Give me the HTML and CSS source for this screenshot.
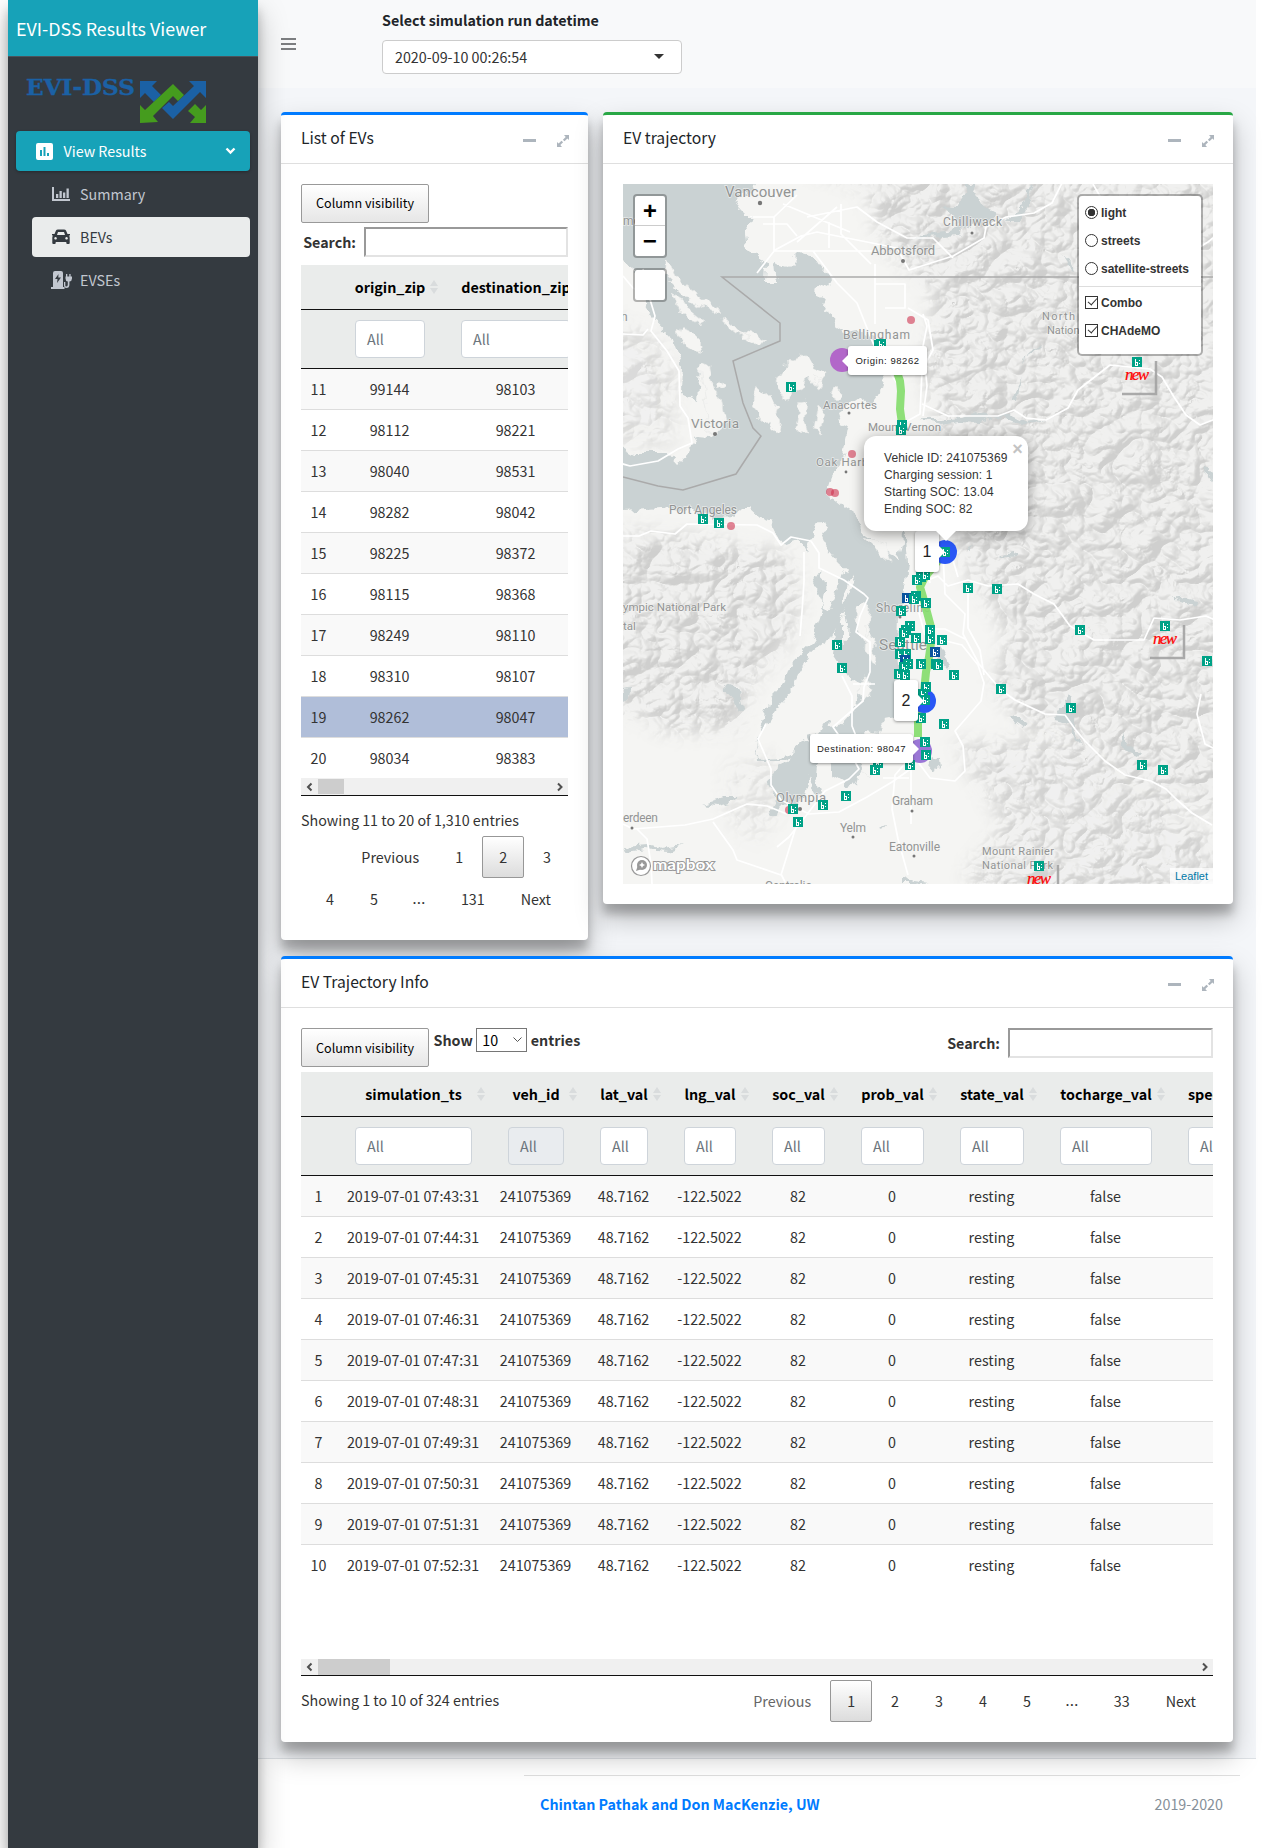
FILE: index.html
```html
<!DOCTYPE html>
<html lang="en">
<head>
<meta charset="utf-8">
<title>EVI-DSS Results Viewer</title>
<link rel="stylesheet" href="styles.css">
</head>
<body>
<svg class="defs" width="0" height="0" aria-hidden="true">
  <defs>
  <path id="expand" d="M8 1h5v5l-1.600-1.600-2.900 2.900-1.600-1.600 2.800-2.800zM6 13H1V8l1.600 1.600 2.900-2.900 1.600 1.600-2.800 2.800z"/>
  <g id="ev"><path fill="#00a287" d="M0 0h10v10H0z"/><path fill="#fff" d="M3 2h1v3h2v4H3zM7 3h1v1H7zM7 6h1v1H7z"/><path fill="#00a287" d="M4 6h1v2H4z"/></g>
  <g id="evb"><path fill="#0a549e" d="M0 0h10v10H0z"/><path fill="#fff" d="M3 2h1v3h2v4H3zM7 3h1v1H7zM7 6h1v1H7z"/><path fill="#0a549e" d="M4 6h1v2H4z"/></g>
  <path id="sort" fill="#d9dcdd" d="M4 0l4 6H0zM4 14l4-6H0z"/>
  </defs>
</svg>
<div class="app">
  <aside class="sidebar">
    <div class="brand">EVI-DSS Results Viewer</div>
    <svg class="logo" viewBox="0 0 184 50" width="184" height="50">
      <text x="0" y="22" textLength="109" lengthAdjust="spacingAndGlyphs">EVI-DSS</text>
      <g fill="#1b61a5"><path d="M114 8h17l-5 5 9 9-7 7-9-9-5 5z"/><path d="M180 8h-17l5 5-21 20-4-4-7 6 11 11 27-27 6 6z"/></g>
      <g fill="#459c1e"><path d="M114 50V32l5 5 28-26 11 11-6 6-5-5-20 20 5 6z"/><path d="M180 50V32l-5 5-6-6-7 7 7 6-5 6z"/></g>
    </svg>
    <nav class="menu">
      <a class="item top">
        <svg class="ic" width="17" height="17" viewBox="0 0 17 17"><path fill="#fff" fill-rule="evenodd" d="M2 0h13q2 0 2 2v13q0 2-2 2H2q-2 0-2-2V2q0-2 2-2zM4 7v6h2V7zM7.500 4v9h2V4zM11 10v3h2v-3z"/></svg>
        <span>View Results</span>
        <svg class="chev" width="11" height="8" viewBox="0 0 11 8"><path d="M1.500 1.500l4 4 4-4" fill="none" stroke="#fff" stroke-width="2.400"/></svg>
      </a>
      <a class="item sub"><svg class="ic" width="20" height="16" viewBox="0 0 20 16"><path fill="#c2c7d0" d="M1 1h2v12h16v2H1zM5 8h2.300v4H5zM8.500 5h2.300v7H8.500zM12 6.500h2.300V12H12zM15.500 2.500h2.300V12h-2.300z"/></svg><span>Summary</span></a>
      <a class="item sub active"><svg class="ic" width="20" height="16" viewBox="0 0 20 16"><path fill="#343a40" fill-rule="evenodd" d="M5 1.500Q5.500.5 7 .5h6q1.500 0 2 1L16.500 5H19v1.500h-1.300q1 .7 1 2V14q0 1-1 1h-1.400q-1 0-1-1v-1H4.700v1q0 1-1 1H2.300q-1 0-1-1V8.500q0-1.300 1-2H1V5h2.500zM7 3L6 6h8l-1-3zM4.500 8a1.300 1.300 0 1 0 .1 0zM15.500 8a1.300 1.300 0 1 0 .1 0z"/></svg><span>BEVs</span></a>
      <a class="item sub"><svg class="ic" width="22" height="19" viewBox="0 0 22 19"><path fill="#c2c7d0" fill-rule="evenodd" d="M2 2q0-2 2-2h6q2 0 2 2v14h1.500v2H0v-2h2zM7.500 3L4 8h2.500L6 12l4-5.500H7.300z"/><path fill="#c2c7d0" d="M15 3h1.300V5.500h2V3h1.300v2.500H21v2q0 2.500-2.600 3v3q0 3.500-3 3.500-2.400 0-2.400-2.500V11h1.300v3.500q0 1 1 1 1.500 0 1.500-2v-3q-2.300-.5-2.300-3v-2h.5z"/></svg><span>EVSEs</span></a>
    </nav>
  </aside>
  <div class="main">
    <header class="topbar">
      <svg class="burger" width="15" height="13" viewBox="0 0 15 13"><path fill="#7c7e80" d="M0 0h15v2H0zM0 5h15v2H0zM0 10h15v2H0z"/></svg>
      <div class="picker">
        <label>Select simulation run datetime</label>
        <div class="select"><span>2020-09-10 00:26:54</span><i></i></div>
      </div>
    </header>
    <section class="content">
      <div class="card evs">
        <div class="card-head"><h3>List of EVs</h3><b class="min"></b><svg class="exp"><use href="#expand"/></svg></div>
        <div class="card-body">
          <button class="btn">Column visibility</button>
          <label class="search">Search:<input type="text"></label>
          <div class="scroll">
            <table class="t1">
              <colgroup><col class="c36"><col class="c106"><col class="c146"></colgroup>
              <thead>
                <tr class="names"><th></th><th>origin_zip<svg class="so"><use href="#sort"/></svg></th><th>destination_zip</th></tr>
                <tr class="filters"><th></th><th><div class="f">All</div></th><th><div class="f">All</div></th></tr>
              </thead>
              <tbody>
                <tr><td>11</td><td>99144</td><td>98103</td></tr>
                <tr><td>12</td><td>98112</td><td>98221</td></tr>
                <tr><td>13</td><td>98040</td><td>98531</td></tr>
                <tr><td>14</td><td>98282</td><td>98042</td></tr>
                <tr><td>15</td><td>98225</td><td>98372</td></tr>
                <tr><td>16</td><td>98115</td><td>98368</td></tr>
                <tr><td>17</td><td>98249</td><td>98110</td></tr>
                <tr><td>18</td><td>98310</td><td>98107</td></tr>
                <tr class="sel"><td>19</td><td>98262</td><td>98047</td></tr>
                <tr><td>20</td><td>98034</td><td>98383</td></tr>
              </tbody>
            </table>
          </div>
          <div class="bar"><svg width="17" height="16" viewBox="0 0 17 16"><path d="M10.500 4.500L7 8l3.500 3.500"/></svg><span class="thumb w26"></span><svg class="r" width="17" height="16" viewBox="0 0 17 16"><path d="M7 4.500L10.500 8 7 11.500"/></svg></div>
          <div class="info">Showing 11 to 20 of 1,310 entries</div>
          <div class="pages"><a>Previous</a><a>1</a><a class="cur">2</a><a>3</a><a>4</a><a>5</a><span>…</span><a>131</a><a>Next</a></div>
        </div>
      </div>

      <div class="card traj">
        <div class="card-head"><h3>EV trajectory</h3><b class="min"></b><svg class="exp"><use href="#expand"/></svg></div>
        <div class="card-body">
          <div class="map">
            <svg class="canvas" width="590" height="700" viewBox="0 0 590 700">
              <defs>
                <filter id="hill" x="0" y="0" width="100%" height="100%" color-interpolation-filters="sRGB">
                  <feTurbulence type="turbulence" baseFrequency=".026 .03" numOctaves="3" seed="8" result="n"/>
                  <feColorMatrix in="n" type="matrix" values="0 0 0 0 0 0 0 0 0 0 0 0 0 0 0 1.200 0 0 0 0"/>
                  <feDiffuseLighting surfaceScale="15" diffuseConstant="1.130" lighting-color="#fff"><feDistantLight azimuth="225" elevation="55"/></feDiffuseLighting>
                  <feComponentTransfer><feFuncR type="linear" slope=".13" intercept=".815"/><feFuncG type="linear" slope=".13" intercept=".815"/><feFuncB type="linear" slope=".13" intercept=".81"/></feComponentTransfer>
                </filter>
                <filter id="coast" filterUnits="userSpaceOnUse" x="-20" y="-20" width="630" height="740">
                  <feTurbulence type="fractalNoise" baseFrequency=".09" numOctaves="3" seed="3" result="t"/>
                  <feDisplacementMap in="SourceGraphic" in2="t" scale="11" xChannelSelector="R" yChannelSelector="G"/>
                </filter>
                <filter id="soft"><feGaussianBlur stdDeviation="9"/></filter>
                <mask id="hills"><g filter="url(#soft)" fill="#fff">
                  <path d="M170-20H610V640L520 600 470 550 400 545 370 500 385 450 350 400 320 340 320 260 300 190 310 110 260 60 240 5z"/>
                  <path d="M330 560L470 550 610 670V720H380L340 690 380 640z" opacity=".9"/>
                  <path d="M-20 345L60 350 170 370 178 420 165 460 130 500 115 545 50 550-20 520z"/>
                  <path d="M-20 130L30 150 55 190 50 260-20 260z" opacity=".7"/><path d="M105 580l45-10 12 50-30 40-30-30z" opacity=".5"/>
                </g></mask>
              </defs>
              <path fill="#f5f5f3" d="M0 0h590v700H0z"/>
              <g mask="url(#hills)"><rect width="590" height="700" filter="url(#hill)"/></g>
              <g filter="url(#coast)">
              <g class="water">
                <path d="M-20-20H133V0L128 8 117 11 112 23 120 31 129 31 122 49 124 66 133 70 144 79 143 98 153 98 151 79 165 83 178 70 190 73 208 96 204 104 194 102 193 110 202 114 199 126 210 133 214 143 224 149 240 146 251 153 263 164 258 190 264 204 252 213 246 221 235 214 224 222 214 229 217 238 226 241 222 262 218 277 208 293 203 309 212 314 222 323 232 330 239 348 255 360 268 370 276 376 282 340 285 380 281 413 275 430 274 470 277 500 273 533 262 535 255 548 242 546 233 552 240 575 233 600 225 602 208 592 205 573 195 570 190 560 200 545 220 540 233 522 237 500 232 480 222 466 224 440 218 420 232 400 225 385 215 378 204 365 198 350 203 340 197 335 190 350 184 368 176 354 160 360 153 350 147 338 137 334 127 325 119 325 110 333 95 334 60 326 37 324 0 327H-20V263H0L10 269 44 269 54 280 64 272 74 253 86 254 94 249 97 223 90 199 84 179 77 183 74 216 59 209 60 183 49 153 30 133 20 116 19 93 7 85 0 72H-20z"/>
                <path d="M190 400l8-12 5 10-3 25 5 5 12-30 8-15 4 8-10 22 1 18-12 24-18 12-14 23-7 16-11 12-12 19-12 18-2 16 5 4 20-1 15-4 12-11-3-7 15-3 8-13 4 4-2 12-10 6-8 7-25 12h-29l-1-12 4-18 11-34 15-16 3-16 23-22 12-37-3-6z"/>
                <path d="M214 430l6 10v20l10 5 8 30-10 3-10-15-8-12z"/>
                <path d="M144 600l10-15 11-5 4-13 10-9 11 6 5-10 8-5 3 12-10 12-2 20 5 17-6 3-7-21-5 20-10 10-8-3-8 8-3 5-6-2 8-15z"/>
                <path d="M100 500l17 7 4 18-4 5-6-16-10-8zM0 506l6-1-1 10-5 2zM0 19v-4l4 4zM345 365l7-4-3 6zM376 371l18-5v4l-15 2zM316 460l5 6 6 15-4 5-8-9zM430 535l17-24 4 3 0 33 7 14-9-9-3-14zM500 548l7 15 10 6-3 4-9-4-7-12zM387 530l18 10-5 4-12-8zM308 572l8 5 1 7-6 4-6-7zM553 412l22 5-1 6-18-7z"/>
                <path d="M337 40l-14 8-24 3-10 5 12-2 35-2 10-12 22-4 3-8-15-8-7-15 2-5h-8l-1 9-8 14-14-1zM382 37l14-9 10-22 4-4-7 22-7 13zM437 67l10 8 3 13-3-3-4-12zM402 170l10-6 5-3-3 5-13 4-8 49-4-1 8-25zM300 235l24 0 16-1 15-5 12 3 18-2 19 9 20-3-17 5-20-3-14-7-18 7-18-1-21 3-15-3zM582 280l8 9v10l-6-10z"/>
                <path d="M280 700v-7l12 5 14 2zM80 620l20-6 18 0-6 4-18 4zM0 662l26-2 14 4 18-3-12 6-24-2-20 3zM256 644l8-2-4 5z"/>
              </g>
              <g fill="#f5f5f3" stroke="#e8e9e8" stroke-width=".7">
                <path d="M41 74l6 7 6 12 8 7 10 8 12 10 14 8-6 4-14-8-14-8-16-16-6-12zM50 110l10 6 8 12 12 9-2 5-12-7-10-10zM58 142l10 5 12 12 0 6-8 6-8-12-10-8zM100 133l12 9 5 8-10-4zM120 148l16 4 7 5-14 2-8-4zM77 182l8-3 4 20 10 20 3 20-8 13-8-2-2-25z"/>
                <path d="M158 186l10-11 12-4 11 9 12 8-1 8-12 4-8-5-3 10-10 3-2 8-8-5-6-12zM133 202l12 9 11 12-3 8 4 13-2 5-20-18-8-9zM176 218l8-2-2 20 3 12-12-1 2-15zM194 221l9 8-6 16 3 5-10-4zM192 192l8 4-3 8-7-6zM210 204l5-2 4 8-6 6-5-4zM238 352l10 10 20 15-6-16-18-6zM233 425l8-8 7 10-2 22-5 10-6-14zM243 440l9 14-2 26-8-12z"/>
                <path d="M243 552l8 5 5 20-8 18-10-5-3-18 4-10zM95 202l6-3 2 4-7 4zM115 147l12 8-9 1zM236 497l7-3 5 12-6 12-7-8z"/>
              </g>
              </g>
              <g class="roads">
                <path d="M0 92l10 12 16 8 6 20-4 15 16 20 12 20 1 35 8 12 4 25-14 6-20 12-28 5-21-6M0 150l20 1 5-6M20 85l4 15 6 15M134 89l14-18 4-5 26-14 16-4 80 16 12 22 44-14 31-18 2-11 20-10 28-4 18-10 15-30 6-12M127 33h24l23-22M151 33v34l28 0h70M150 15l8-10M160 20l24 10 43 18M174 58l40-35M184 33l50-10 20 15 30 16h26l20 20M140 40h24l10 12M206 38v26M218 20v30l30 30M190 67l24 32 20 20 16 40 10 20 14 20 5 45 4 35 12 60 12 60"/>
                <path d="M252 80v60M252 100h30V124h-20M285 124l20 12 5 30-11 20-2 44-18 10M299 220l26 12h50l16-6 12 8 20 2 22-12 10-18 32-25 40 4 12 8 12 20 12 18 14 10 20-8M470 0l8 14 10 5M565 70l20-12 5-4M300 130l4 12-4 20 4 40-4 30"/>
                <path d="M0 352l16 0 12-5 24 3 12-10 70 1 16 8 8 12 10-8 20 4 8 12v15l25 12 20 14 4 4-8 18-4 16 14 10v30l-6 15-1 14-30 26 14 20 12 22-10 10-24 12-20 26-16 20-12 10M181 368v30l-2 30-2 24M219 492l10 20v30l10 25M143 540l-8 15 13 30v16l10 15 28 14 30-2 28-15 25-15 20-14 14-24M230 500h22"/>
                <path d="M0 640l10 5 52-4 28-6 34-15 20 2 20 8M90 638l20 28 4 10 44 15 14-45M14 645l10 10 4 25 1 20M158 690l5 10M302 370v12l-6 22 0 25 6 22M295 400l20-8 10 10 20-6 20 6 30-2 16 10 20 10 16 22 24 14h50l10-22 26 2 26-4 22 10 7 12 0 24 12 45 10 6v30l-2 32 9 35M320 370l2 40 20 20-2 20 16 30 10 12 12 14 14 10 30 14 20 1 10 14 10 12 20 20 20 14 26 6 15 8 10 10 16 14 20 12M319 456l20 5 16 20 6 18-3 18-26 30 8 15 2 25-10 10-25-3-15-20M335 393l-6-20M578 510l-4 20 8 30 8 4M312 445h10l20 10M298 560l-12 15-14 16-3 34 6 30 10 36M288 585v55M260 594h26M345 404l0 40 12 22 4 25"/>
              </g>
              <path d="M590 93H99L157 139V157L110 177 120 219 130 244 138 252 113 290 60 306 35 302 0 293" fill="none" stroke="#aaa" stroke-width="1.500"/>
              <g class="labels">
                <text x="102" y="13" font-size="15" textLength="71">Vancouver</text><text x="248" y="71" font-size="13" textLength="64">Abbotsford</text><text x="320" y="42" font-size="12" textLength="59">Chilliwack</text>
                <text x="220" y="155" font-size="12" textLength="67">Bellingham</text><text x="200" y="225" font-size="11.500" textLength="54">Anacortes</text><text x="245" y="247" font-size="11.500" textLength="73">Mount Vernon</text><text x="68" y="244" font-size="13.500" textLength="48">Victoria</text>
                <text x="193" y="282" font-size="11.500" textLength="64">Oak Harbor</text><text x="46" y="330" font-size="12" textLength="68">Port Angeles</text><text x="0" y="41" font-size="12">mo</text><text x="-2" y="137" font-size="12">n</text>
                <text x="0" y="427" font-size="11.500" textLength="103">ympic National Park</text><text x="0" y="446" font-size="11.500">tal</text><text x="253" y="428" font-size="12" textLength="54">Shoreline</text><text x="256" y="466" font-size="15.500" textLength="48">Seattle</text>
                <text x="153" y="618" font-size="13" textLength="50">Olympia</text><text x="0" y="638" font-size="12" textLength="35">erdeen</text><text x="217" y="648" font-size="12" textLength="26">Yelm</text><text x="269" y="621" font-size="12" textLength="41">Graham</text><text x="266" y="667" font-size="12" textLength="51">Eatonville</text>
                <text x="359" y="671" font-size="11" textLength="72">Mount Rainier</text><text x="359" y="685" font-size="11" textLength="71">National Park</text><text x="142" y="706" font-size="12" textLength="47">Centralia</text><text x="419" y="136" font-size="11" textLength="67">North Casc</text><text x="424" y="150" font-size="11">Nation</text>
              </g>
              <g fill="#777"><circle cx="137" cy="19" r="2.200"/><circle cx="280" cy="77" r="2"/><circle cx="349" cy="49" r="1.500"/><circle cx="226" cy="229" r="1.500"/><circle cx="92" cy="250" r="2"/><circle cx="223" cy="288" r="1.400"/><circle cx="177" cy="625" r="2"/><circle cx="230" cy="653" r="1.500"/><circle cx="289" cy="627" r="1.500"/><circle cx="291" cy="672" r="1.500"/><circle cx="9" cy="644" r="1.500"/><circle cx="277" cy="433" r="1.500"/></g>
              <circle cx="219" cy="176" r="12" fill="#b267c9"/><circle cx="297" cy="567" r="12" fill="#9b77d6"/>
              <path d="M274 170l-1 15 4 12 1 10-1 18 3 22M322 368L302 393l-5 10 3 10 4 15 4 15 0 16-2 14-3 15-2 20-5 17-1 14v14" fill="none" stroke="#85dd6e" stroke-opacity=".93" stroke-width="8" stroke-linejoin="round"/>
              <circle cx="322" cy="368" r="12" fill="#2957f5"/><circle cx="301" cy="517" r="12" fill="#2957f5"/>
              <g fill="#ce3350" fill-opacity=".6"><circle cx="288" cy="136" r="4"/><circle cx="229" cy="270" r="4"/><circle cx="207" cy="308" r="4"/><circle cx="212" cy="309" r="4"/><circle cx="108" cy="342" r="4"/><circle cx="166" cy="626" r="4"/></g>
              <g transform="translate(-5 -5)">
                <use href="#ev" x="168" y="203"/><use href="#ev" x="256" y="161"/><use href="#ev" x="258" y="160"/><use href="#ev" x="279" y="241"/><use href="#ev" x="278" y="246"/><use href="#ev" x="80" y="335"/><use href="#ev" x="96" y="339"/><use href="#ev" x="514" y="178"/>
                <use href="#ev" x="214" y="461"/><use href="#ev" x="219" y="484"/><use href="#ev" x="298" y="393"/><use href="#ev" x="302" y="391"/><use href="#ev" x="294" y="396"/><use href="#evb" x="284" y="414"/><use href="#ev" x="293" y="412"/><use href="#ev" x="291" y="415"/><use href="#ev" x="303" y="419"/><use href="#ev" x="278" y="427"/><use href="#ev" x="287" y="442"/><use href="#ev" x="283" y="446"/><use href="#ev" x="281" y="449"/><use href="#ev" x="293" y="454"/><use href="#ev" x="277" y="458"/><use href="#ev" x="277" y="470"/><use href="#ev" x="283" y="470"/><use href="#evb" x="282" y="476"/><use href="#ev" x="285" y="480"/><use href="#ev" x="281" y="483"/><use href="#ev" x="298" y="480"/><use href="#ev" x="276" y="490"/><use href="#ev" x="282" y="491"/><use href="#ev" x="303" y="503"/><use href="#ev" x="300" y="510"/><use href="#ev" x="302" y="516"/><use href="#ev" x="298" y="534"/><use href="#ev" x="302" y="558"/><use href="#ev" x="303" y="571"/><use href="#ev" x="287" y="581"/><use href="#ev" x="255" y="579"/><use href="#ev" x="252" y="586"/><use href="#ev" x="223" y="612"/><use href="#ev" x="200" y="621"/><use href="#ev" x="170" y="625"/><use href="#ev" x="175" y="638"/>
                <use href="#ev" x="345" y="404"/><use href="#ev" x="374" y="405"/><use href="#ev" x="457" y="446"/><use href="#ev" x="542" y="442"/><use href="#ev" x="584" y="477"/><use href="#ev" x="307" y="446"/><use href="#ev" x="307" y="455"/><use href="#ev" x="319" y="456"/><use href="#evb" x="312" y="468"/><use href="#ev" x="313" y="480"/><use href="#ev" x="315" y="481"/><use href="#ev" x="331" y="491"/><use href="#ev" x="378" y="505"/><use href="#ev" x="448" y="524"/><use href="#ev" x="321" y="540"/><use href="#ev" x="519" y="581"/><use href="#ev" x="540" y="586"/><use href="#ev" x="416" y="682"/><use href="#ev" x="322" y="368"/>
              </g>
              <g fill="none" stroke="#a2a2a2" stroke-opacity=".9" stroke-width="2.500"><path d="M533 177v33h-34M561 441v33h-34M435 681v30"/></g>
              <g class="new"><text x="502" y="196" textLength="24">new</text><text x="530" y="460" textLength="24">new</text><text x="404" y="700" textLength="24">new</text></g>
              <g transform="translate(7 672)"><circle cx="11" cy="10" r="9.500" fill="#fff" stroke="#999" stroke-width="1.200"/><circle cx="12" cy="9" r="5" fill="#999"/><path d="M6 15l2-6 4 4z" fill="#999"/><path d="M12 6l1 2 2 1-2 1-1 2-1-2-2-1 2-1z" fill="#fff"/><text class="mbox" x="23" y="14" textLength="61" lengthAdjust="spacingAndGlyphs">mapbox</text></g>
            </svg>
            <div class="zoomctl"><span>+</span><span>−</span></div>
            <div class="blank"></div>
            <div class="layers">
              <p><i class="rad on"></i>light</p><p><i class="rad"></i>streets</p><p><i class="rad"></i>satellite-streets</p>
              <div class="sep"></div>
              <p><i class="chk"></i>Combo</p><p><i class="chk"></i>CHAdeMO</p>
            </div>
            <div class="tip right origin">Origin: 98262</div>
            <div class="tip left dest">Destination: 98047</div>
            <div class="tip left num one">1</div>
            <div class="tip left num two">2</div>
            <div class="popup">Vehicle ID: 241075369<br>Charging session: 1<br>Starting SOC: 13.04<br>Ending SOC: 82<span>×</span></div>
            <div class="attr">Leaflet</div>
          </div>
        </div>
      </div>

      <div class="card inf">
        <div class="card-head"><h3>EV Trajectory Info</h3><b class="min"></b><svg class="exp"><use href="#expand"/></svg></div>
        <div class="card-body">
          <div class="tools">
            <button class="btn">Column visibility</button>
            <label class="len">Show <span class="ten">10<svg width="9" height="6" viewBox="0 0 9 6"><path d="M.5.5l4 4 4-4" fill="none" stroke="#555"/></svg></span> entries</label>
            <label class="search">Search:<input type="text"></label>
          </div>
          <div class="scroll">
            <table class="t2">
              <colgroup><col class="c36"><col class="c153"><col class="c92"><col class="c84"><col class="c88"><col class="c89"><col class="c99"><col class="c100"><col class="c128"><col class="c128"></colgroup>
              <thead>
                <tr class="names"><th></th><th>simulation_ts<svg class="so"><use href="#sort"/></svg></th><th>veh_id<svg class="so"><use href="#sort"/></svg></th><th>lat_val<svg class="so"><use href="#sort"/></svg></th><th>lng_val<svg class="so"><use href="#sort"/></svg></th><th>soc_val<svg class="so"><use href="#sort"/></svg></th><th>prob_val<svg class="so"><use href="#sort"/></svg></th><th>state_val<svg class="so"><use href="#sort"/></svg></th><th>tocharge_val<svg class="so"><use href="#sort"/></svg></th><th class="last">speed_val</th></tr>
                <tr class="filters"><th></th><th><div class="f">All</div></th><th><div class="f off">All</div></th><th><div class="f">All</div></th><th><div class="f">All</div></th><th><div class="f">All</div></th><th><div class="f">All</div></th><th><div class="f">All</div></th><th><div class="f">All</div></th><th><div class="f">All</div></th></tr>
              </thead>
              <tbody>
                <tr><td>1</td><td>2019-07-01 07:43:31</td><td>241075369</td><td>48.7162</td><td>-122.5022</td><td>82</td><td>0</td><td>resting</td><td>false</td><td></td></tr>
                <tr><td>2</td><td>2019-07-01 07:44:31</td><td>241075369</td><td>48.7162</td><td>-122.5022</td><td>82</td><td>0</td><td>resting</td><td>false</td><td></td></tr>
                <tr><td>3</td><td>2019-07-01 07:45:31</td><td>241075369</td><td>48.7162</td><td>-122.5022</td><td>82</td><td>0</td><td>resting</td><td>false</td><td></td></tr>
                <tr><td>4</td><td>2019-07-01 07:46:31</td><td>241075369</td><td>48.7162</td><td>-122.5022</td><td>82</td><td>0</td><td>resting</td><td>false</td><td></td></tr>
                <tr><td>5</td><td>2019-07-01 07:47:31</td><td>241075369</td><td>48.7162</td><td>-122.5022</td><td>82</td><td>0</td><td>resting</td><td>false</td><td></td></tr>
                <tr><td>6</td><td>2019-07-01 07:48:31</td><td>241075369</td><td>48.7162</td><td>-122.5022</td><td>82</td><td>0</td><td>resting</td><td>false</td><td></td></tr>
                <tr><td>7</td><td>2019-07-01 07:49:31</td><td>241075369</td><td>48.7162</td><td>-122.5022</td><td>82</td><td>0</td><td>resting</td><td>false</td><td></td></tr>
                <tr><td>8</td><td>2019-07-01 07:50:31</td><td>241075369</td><td>48.7162</td><td>-122.5022</td><td>82</td><td>0</td><td>resting</td><td>false</td><td></td></tr>
                <tr><td>9</td><td>2019-07-01 07:51:31</td><td>241075369</td><td>48.7162</td><td>-122.5022</td><td>82</td><td>0</td><td>resting</td><td>false</td><td></td></tr>
                <tr><td>10</td><td>2019-07-01 07:52:31</td><td>241075369</td><td>48.7162</td><td>-122.5022</td><td>82</td><td>0</td><td>resting</td><td>false</td><td></td></tr>
              </tbody>
            </table>
          </div>
          <div class="bar"><svg width="17" height="16" viewBox="0 0 17 16"><path d="M10.500 4.500L7 8l3.500 3.500"/></svg><span class="thumb w72"></span><svg class="r" width="17" height="16" viewBox="0 0 17 16"><path d="M7 4.500L10.500 8 7 11.500"/></svg></div>
          <div class="foot">
            <div class="info">Showing 1 to 10 of 324 entries</div>
            <div class="pages"><a class="dis">Previous</a><a class="cur">1</a><a>2</a><a>3</a><a>4</a><a>5</a><span>…</span><a>33</a><a>Next</a></div>
          </div>
        </div>
      </div>
    </section>
    <footer class="footer"><div><a>Chintan Pathak and Don MacKenzie, UW</a><span>2019-2020</span></div></footer>
  </div>
</div>
</body>
</html>
```
FILE: styles.css
```css
* { box-sizing: border-box; }
body { margin: 0; background: #fff; font-family: "Noto Sans CJK SC", "Noto Sans", sans-serif; font-size: 14.3px; line-height: 24px; color: #333; overflow: hidden; }
.defs { display: block; height: 0; }
.app { display: flex; width: 1248px; height: 1848px; margin-left: 8px; }
.sidebar { flex: none; width: 250px; background: #343a40; z-index: 3; box-shadow: 0 14px 28px rgba(0,0,0,.25), 0 10px 10px rgba(0,0,0,.22); }
.brand { height: 57px; padding: 0 8px; line-height: 56px; font-size: 17.9px; color: #fff; background: #17a2b8; border-bottom: 1px solid #4b545c; }
.logo { display: block; margin: 16px 0 0 18px; }
.logo text { font: bold 22px "DejaVu Serif", serif; fill: #1b61a5; stroke: #1b61a5; stroke-width: .4px; }
.logo + .menu { margin-top: 8px; padding: 0 8px; display: flex; flex-direction: column; gap: 3px; }
.item { display: flex; align-items: center; height: 40px; border-radius: 4px; color: #c2c7d0; }
.item.top { padding: 0 14px 0 20px; gap: 10.500px; color: #fff; background: #17a2b8; box-shadow: 0 1px 3px rgba(0,0,0,.3); }
.item.top .chev { margin-left: auto; }
.item.sub { margin-left: 16px; padding-left: 19px; }
.item.sub .ic { flex: none; margin-right: auto; }
.item.sub span { width: 170px; }
.item.active { background: #eaecec; color: #343a40; }
.main { flex: none; width: 998px; }
.topbar { display: flex; height: 88px; background: #f8f9fa; padding: 9px 0 0 23px; }
.burger { margin-top: 29px; }
.picker { margin-left: 86px; }
.picker label { display: block; height: 31px; line-height: 22px; font-weight: 700; color: #212529; }
.select { display: flex; align-items: center; justify-content: space-between; width: 300px; height: 34px; padding: 0 17px 0 12px; background: #fff; border: 1px solid #ccc; border-radius: 4px; }
.select i { border: 5px solid transparent; border-top-color: #333; border-bottom: 0; margin-top: -2px; }
.content { position: relative; z-index: 2; display: flex; flex-wrap: wrap; align-items: flex-start; align-content: flex-start; gap: 16px 15px; height: 1670px; padding: 24px 23px 16px; background: #f4f6f9; }
.card { display: flex; flex-direction: column; background: #fff; border-radius: 4px; border-top: 3px solid #007bff; box-shadow: 0 14px 28px rgba(0,0,0,.25), 0 10px 10px rgba(0,0,0,.22); }
.evs { width: 307px; height: 828px; }
.traj { width: 630px; height: 792px; border-top-color: #28a745; }
.inf { width: 952px; height: 786px; }
.card-head { display: flex; align-items: center; height: 49px; padding: 0 18px 0 20px; border-bottom: 1px solid #dfdfdf; }
h3 { flex: 1; margin: 0; padding-bottom: 3px; font-size: 15.7px; font-weight: 400; color: #212529; }
.min { width: 13px; height: 3px; margin: 3px 20px 0 0; background: #adb5bd; }
.exp { width: 14px; height: 14px; margin-top: 3px; fill: #adb5bd; }
.card-body { padding: 20px; }
.btn { display: block; width: 128px; height: 39px; padding: 0 0 1px; font: 12.6px/20px "Noto Sans CJK SC", sans-serif; color: #000; background: linear-gradient(#fff, #e6e6e6); border: 1px solid #999; border-radius: 2px; }
.tools .btn { padding: 1px 0 0; }
.search { display: flex; align-items: center; justify-content: flex-end; gap: 8px; font-weight: 700; }
.search input { width: 204px; height: 30px; border: 2px solid #999; border-right-color: #e3e3e3; border-bottom-color: #e3e3e3; background: #fff; }
.evs .search { margin: 4px 0 8px; }
.scroll { overflow: hidden; }
table { table-layout: fixed; border-collapse: separate; border-spacing: 0; }
.t1 { width: 288px; } .t2 { width: 997px; }
.c36 { width: 36px; } .c106 { width: 106px; } .c146 { width: 146px; } .c153 { width: 153px; } .c92 { width: 92px; } .c84 { width: 84px; } .c88 { width: 88px; } .c89 { width: 89px; } .c99 { width: 99px; } .c100 { width: 100px; } .c128 { width: 128px; }
th { padding: 0; background: #eaeceb; border-bottom: 1px solid #111; color: #000; position: relative; white-space: nowrap; }
th.last { text-align: left; padding-left: 18px; }
.names th { height: 45px; }
.filters th { height: 59px; padding: 0 18px; }
.so { position: absolute; right: 5px; top: 15px; width: 8px; height: 14px; }
.f { height: 38px; padding-left: 11px; line-height: 35px; text-align: left; font-weight: 400; color: #6c757d; background: #fff; border: 1px solid #ced4da; border-radius: 4px; overflow: hidden; }
.f.off { background: #e9ecef; }
td { height: 41px; padding: 0 1px 0 0; text-align: center; border-top: 1px solid #ddd; white-space: nowrap; }
tbody tr:first-child td { height: 40px; border-top: 0; }
tbody tr:nth-child(odd) td { background: #f9f9f9; }
tbody tr.sel td { background: #b0bed9; }
.bar { display: flex; height: 18px; padding: 1px 0; background: #f0f0f0; border-bottom: 1px solid #111; }
.bar path { fill: none; stroke: #505050; stroke-width: 2; }
.bar .r { margin-left: auto; }
.thumb { background: #cdcdcd; } .w26 { width: 26px; } .w72 { width: 72px; }
.evs .info { margin: 12px 0 4px; }
.pages { display: flex; flex-wrap: wrap; justify-content: flex-end; }
.pages a, .pages span { height: 42px; padding: 0 16px; margin-left: 2px; line-height: 40px; border: 1px solid transparent; border-radius: 2px; }
.pages span { width: 47px; padding: 0 0 0 1px; margin-left: 0; border-width: 0; text-align: center; font-family: "Open Sans", sans-serif; font-size: 17px; }
.pages .cur { line-height: 40px; border-color: #979797; background: linear-gradient(#fff, #dcdcdc); }
.pages .dis { color: #666; }
.tools { display: flex; align-items: flex-start; height: 44px; }
.len { display: flex; gap: 3.500px; margin-left: 4.500px; font-weight: 700; }
.ten { display: flex; align-items: center; justify-content: space-between; width: 51px; height: 24px; padding: 0 4px 0 5px; border: 1px solid #767676; font-weight: 400; color: #000; }
.tools .search { margin-left: auto; }
.tools .search input { width: 205px; }
.inf .scroll { height: 587px; }
.inf .bar { height: 17px; padding: 0; }
.foot { display: flex; justify-content: space-between; padding-top: 4px; }
.foot .info { padding-top: 8px; }
.footer { height: 90px; padding: 16px 16px 0 266px; background: #fff; border-top: 1px solid #dee2e6; }
.footer div { display: flex; justify-content: space-between; padding: 16px 17px 0 16px; border-top: 1px solid #dfdfdf; color: #869099; }
.footer a { font-weight: 700; color: #007bff; }

.map { position: relative; width: 590px; height: 700px; overflow: hidden; font-family: "Liberation Sans", Arial, sans-serif; }
.canvas { display: block; }
.water { fill: #cad2d3; }
.roads { fill: none; stroke: #fff; stroke-width: 1.7px; stroke-linejoin: round; }
.labels { font-family: Roboto, sans-serif; fill: #929494; stroke: #f5f5f3; stroke-opacity: .7; stroke-width: 1.5px; paint-order: stroke; }
.new { font: italic 17px "Liberation Serif", serif; fill: #f00; stroke: #f00; stroke-width: .2px; }
.mbox { font: bold 16px Lato, sans-serif; fill: #fff; stroke: #999; stroke-width: 2px; paint-order: stroke; }
.zoomctl, .blank, .layers { position: absolute; border: 2px solid rgba(0,0,0,.28); border-radius: 4px; background: #fff; background-clip: padding-box; }
.zoomctl { left: 10px; top: 10px; width: 34px; height: 64px; }
.zoomctl span { display: block; height: 30px; text-align: center; font: bold 24px/33px "Liberation Mono", monospace; color: #000; }
.zoomctl span:first-child { line-height: 34px; border-bottom: 1px solid #ccc; }
.blank { left: 10px; top: 84px; width: 34px; height: 34px; }
.layers { right: 10px; top: 10px; width: 126px; height: 162px; padding-top: 3px; border-radius: 5px; font-weight: 700; font-size: 12px; }
.layers p { display: flex; align-items: center; gap: 3px; height: 28px; margin: 0; padding-left: 6px; }
.sep { height: 1px; margin: 3px 0 2px; background: #ddd; }
.rad, .chk { position: relative; width: 13px; height: 13px; margin-top: -2px; border: 1px solid #333; background: #fff; }
.rad { border-radius: 50%; }
.on { background: radial-gradient(circle, #333 0 3.500px, #fff 4px); }
.chk::after { content: ""; position: absolute; left: 2px; top: 1px; width: 8px; height: 4px; border: solid #333; border-width: 0 0 1.300px 1.300px; transform: rotate(-48deg); }
.tip { position: absolute; height: 29px; line-height: 29px; text-align: center; font-size: 9.500px; letter-spacing: .55px; white-space: nowrap; background: #fff; border-radius: 3px; box-shadow: 0 1px 3px rgba(0,0,0,.4); color: #222; }
.tip::after { content: ""; position: absolute; top: 50%; margin-top: -6px; border: 6px solid transparent; }
.tip.right::after { right: 100%; border-right-color: #fff; }
.tip.left::after { left: 100%; border-left-color: #fff; }
.origin { left: 225px; top: 162px; width: 79px; }
.dest { left: 187px; top: 550px; width: 103px; }
.num { width: 24px; height: 41px; line-height: 41px; font-size: 16px; letter-spacing: 0; }
.one { left: 292px; top: 347px; } .two { left: 271px; top: 496px; }
.popup { position: absolute; left: 241px; top: 252px; width: 164px; height: 95px; padding: 14px 20px; border-radius: 12px; background: #fff; font-size: 12px; line-height: 17px; letter-spacing: .13px; white-space: nowrap; box-shadow: 0 3px 14px rgba(0,0,0,.4); color: #333; }
.popup::after { content: ""; position: absolute; left: 72px; top: 95px; border: 10.500px solid transparent; border-top-color: #fff; border-bottom: 0; }
.popup span { position: absolute; right: 5px; top: 6px; font: bold 18px/14px "Liberation Sans", sans-serif; color: #c3c3c3; }
.attr { position: absolute; right: 0; bottom: 0; width: 43px; height: 16px; line-height: 16px; text-align: center; font-size: 11px; color: #0078a8; background: rgba(255,255,255,.7); }
```
